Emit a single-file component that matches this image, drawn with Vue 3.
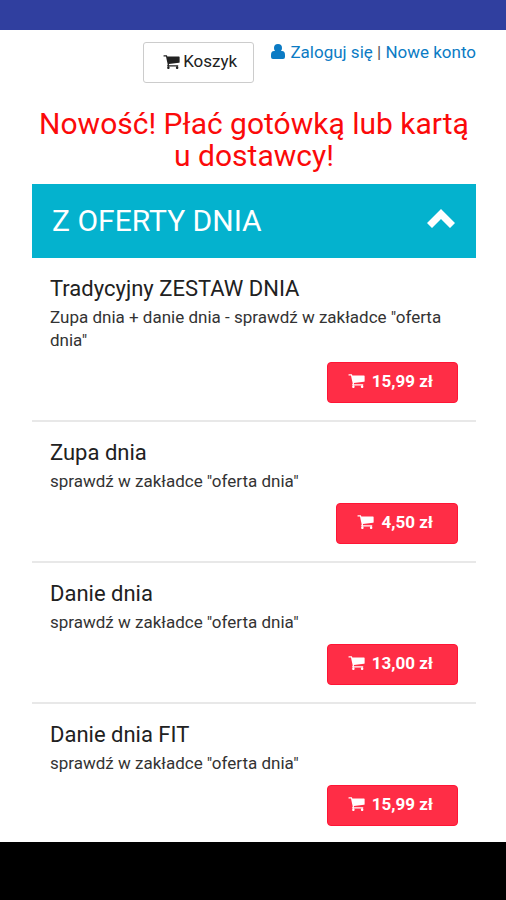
<template>
  <div class="screen">
    <div class="status-bar"></div>

    <main class="content">
      <header class="top">
        <button type="button" class="btn-cart">
          <svg class="icon-cart" viewBox="0 0 1664 1536" aria-hidden="true">
            <path :d="cartPath" />
          </svg>
          <span>Koszyk</span>
        </button>
        <nav class="account">
          <a href="#login">
            <svg class="icon-user" viewBox="0 0 14 15" aria-hidden="true">
              <path :d="userPath" />
            </svg>
            Zaloguj się</a>
          <span class="sep"> | </span>
          <a href="#register">Nowe konto</a>
        </nav>
      </header>

      <h2 class="notice">Nowość! Płać gotówką lub kartą u dostawcy!</h2>

      <button
        type="button"
        class="category"
        :aria-expanded="open"
        @click="open = !open"
      >
        <span>Z OFERTY DNIA</span>
        <svg class="chevron" :class="{ closed: !open }" viewBox="0 0 28 20" aria-hidden="true">
          <path d="M14 0 L28 14 L23 19 L14 10 L5 19 L0 14 Z" />
        </svg>
      </button>

      <!-- Lista dań -->
      <ul v-if="open" class="items">
        <li v-for="item in items" :key="item.id" class="item">
          <h3>{{ item.name }}</h3>
          <p>{{ item.description }}</p>
          <button type="button" class="btn-price">
            <svg class="icon-cart" viewBox="0 0 1664 1536" aria-hidden="true">
              <path :d="cartPath" />
            </svg>
            <span>{{ item.price }} zł</span>
          </button>
        </li>
      </ul>
    </main>

    <div class="nav-bar"></div>
  </div>
</template>

<script setup>
import { ref } from "vue";

const open = ref(true);

const items = ref([
  {
    id: 1,
    name: "Tradycyjny ZESTAW DNIA",
    description: 'Zupa dnia + danie dnia - sprawdź w zakładce "oferta dnia"',
    price: "15,99"
  },
  {
    id: 2,
    name: "Zupa dnia",
    description: 'sprawdź w zakładce "oferta dnia"',
    price: "4,50"
  },
  {
    id: 3,
    name: "Danie dnia",
    description: 'sprawdź w zakładce "oferta dnia"',
    price: "13,00"
  },
  {
    id: 4,
    name: "Danie dnia FIT",
    description: 'sprawdź w zakładce "oferta dnia"',
    price: "15,99"
  }
]);

const cartPath =
  "M640 1408q0 52-38 90t-90 38-90-38-38-90 38-90 90-38 90 38 38 90zm896 0q0 52-38 90t-90 38-90-38-38-90 38-90 90-38 90 38 38 90zm128-1088v512q0 24-16.500 42.500t-40.500 21.500l-1044 122q13 60 13 70 0 16-24 64h920q26 0 45 19t19 45-19 45-45 19h-1024q-26 0-45-19t-19-45q0-11 8-31.500t16-36 21.500-40 15.500-29.500l-177-823h-204q-26 0-45-19t-19-45 19-45 45-19h256q16 0 28.500 6.500t19.500 15.500 13 24.500 8 26 5.500 29.500 4.500 26h1201q26 0 45 19t19 45z";

const userPath =
  "M7 0a4 4 0 0 1 4 4a4 4 0 0 1-1 3H11Q14 7 14 11V13Q14 15 12 15H2Q0 15 0 13V11Q0 7 3 7H4A4 4 0 0 1 3 4a4 4 0 0 1 4-4z";
</script>

<style>
body {
  background: #fff;
}
</style>

<style scoped>
.screen {
  display: flex;
  flex-direction: column;
  min-height: 100vh;
  font-family: Roboto, sans-serif;
  color: #212121;
}

.status-bar {
  height: 30px;
  background: #303f9f;
}

.nav-bar {
  height: 58px;
  background: #000;
}

.content {
  flex: 1;
  padding: 0 30px 0 32px;
}

button {
  font-family: inherit;
  cursor: pointer;
}

svg {
  fill: currentColor;
}

.top {
  display: flex;
  justify-content: flex-end;
  align-items: flex-start;
  gap: 17px;
  padding-top: 12px;
}

.btn-cart {
  display: flex;
  align-items: center;
  gap: 3px;
  height: 41px;
  padding: 0 16px 3px 19px;
  background: #fff;
  border: 1px solid #ccc;
  border-radius: 3px;
  font-size: 17px;
  color: #212121;
}

.icon-cart {
  width: 17px;
  height: 15px;
}

.account {
  font-size: 17px;
  line-height: 20px;
  color: #555;
}

.account a {
  color: #0b7bc4;
  text-decoration: none;
}

.icon-user {
  width: 14px;
  height: 15px;
  margin-right: 1px;
  vertical-align: -1px;
}

.notice {
  margin: 25px 0 12px;
  font-size: 30px;
  line-height: 32px;
  font-weight: 400;
  text-align: center;
  color: #fb0a0a;
}

.category {
  display: flex;
  justify-content: space-between;
  align-items: center;
  width: 100%;
  height: 74px;
  padding: 0 21px 1px 20px;
  border: none;
  background: #04b2ce;
  font-size: 30px;
  color: #fff;
}

.chevron {
  width: 28px;
  height: 20px;
  margin-bottom: 4px;
}

.chevron.closed {
  transform: rotate(180deg);
}

.items {
  margin: 0;
  padding: 0;
  list-style: none;
}

.item {
  display: flex;
  flex-direction: column;
  padding: 19px 18px 17px;
  border-bottom: 2px solid #e8e8e8;
}

.item:last-child {
  padding-bottom: 16px;
  border-bottom: none;
}

.item h3 {
  margin: 0 0 5px;
  font-size: 22px;
  line-height: 24px;
  font-weight: 400;
}

.item p {
  margin: 0 0 10px;
  font-size: 17px;
  line-height: 23px;
  color: #333;
}

.btn-price {
  display: flex;
  align-items: center;
  align-self: flex-end;
  gap: 7px;
  height: 41px;
  padding: 0 24px 4px 20px;
  border: 1px solid #ff1535;
  border-radius: 4px;
  background: #ff2d46;
  font-size: 17px;
  font-weight: 700;
  color: #fff;
}
</style>
